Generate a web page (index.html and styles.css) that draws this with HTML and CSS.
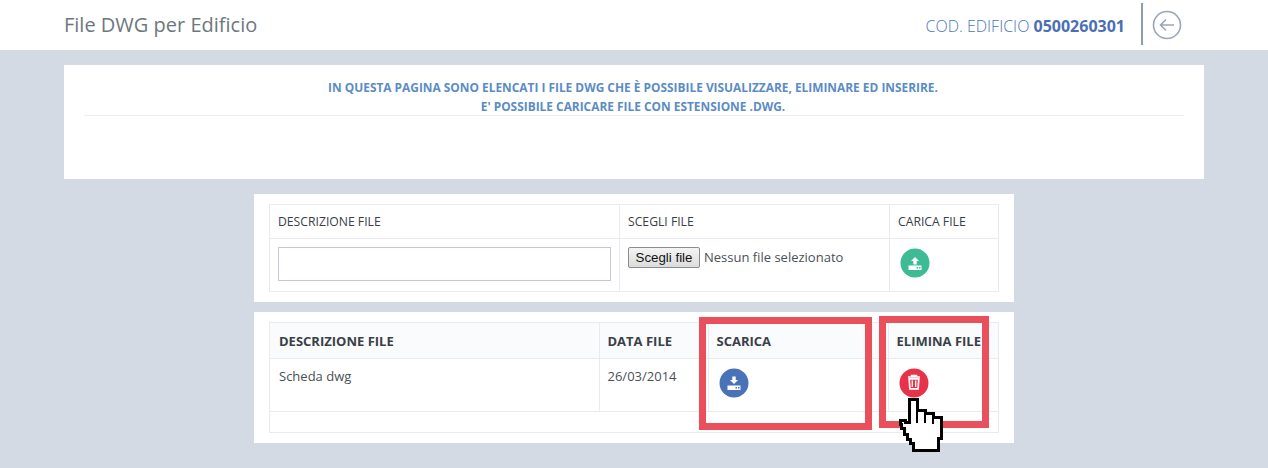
FILE: index.html
```html
<!DOCTYPE html>
<html lang="it">
<head>
<meta charset="utf-8">
<title>File DWG per Edificio</title>
<link rel="stylesheet" href="styles.css">
</head>
<body>
<header class="topbar">
  <h1 class="title">File DWG per Edificio</h1>
  <div class="topbar-right">
    <span class="code">COD. EDIFICIO <strong>0500260301</strong></span>
    <span class="divider"></span>
    <svg class="back" width="30" height="30" viewBox="0 0 30 30" fill="none" stroke="#9aa4bd">
      <circle cx="15" cy="15" r="13.5" stroke-width="1.6"/>
      <path d="M22 15H8.5M14 9.5L8.5 15l5.5 5.500" stroke-width="1.6"/>
    </svg>
  </div>
</header>

<section class="panel intro">
  <p class="intro-text">In questa pagina sono elencati i file DWG che è possibile visualizzare, eliminare ed inserire.<br>E' possibile caricare file con estensione .dwg.</p>
  <div class="intro-rule"></div>
</section>

<section class="card">
  <table class="grid upload">
    <thead>
      <tr><th class="u1">Descrizione file</th><th class="u2">Scegli file</th><th class="u3">Carica file</th></tr>
    </thead>
    <tbody>
      <tr>
        <td><input class="text-input" type="text"></td>
        <td><span class="file-picker"><button class="file-btn" type="button">Scegli file</button><span class="file-name">Nessun file selezionato</span></span></td>
        <td>
          <svg class="round" width="30" height="30" viewBox="0 0 30 30">
            <circle cx="15" cy="15" r="14.500" fill="#3dbb93"/>
            <path d="M15 9l4 4h-2.300v3.500h-3.400V13H11z" fill="#fff"/>
            <path d="M8.500 17.500h13v4.500h-13z" fill="#fff"/>
            <path d="M16.500 19h1.500v1.500h-1.500zM19 19h1.500v1.500H19z" fill="#3dbb93"/>
          </svg>
        </td>
      </tr>
    </tbody>
  </table>
</section>

<section class="card list-card">
  <div class="list-frame">
    <table class="grid list">
      <thead>
        <tr><th class="l1">Descrizione file</th><th class="l2">Data file</th><th class="l3">Scarica</th><th class="l4">Elimina file</th></tr>
      </thead>
      <tbody>
        <tr>
          <td>Scheda dwg</td>
          <td>26/03/2014</td>
          <td>
            <svg class="round" width="30" height="30" viewBox="0 0 30 30">
              <circle cx="15" cy="15" r="14.500" fill="#4a72b8"/>
              <path d="M13.300 8.500h3.400V12H19l-4 4-4-4h2.300z" fill="#fff"/>
              <path d="M8.500 17.500h13v4.500h-13z" fill="#fff"/>
              <path d="M16.500 19h1.500v1.500h-1.500zM19 19h1.500v1.500H19z" fill="#4a72b8"/>
            </svg>
          </td>
          <td>
            <svg class="round" width="30" height="30" viewBox="0 0 30 30">
              <circle cx="15" cy="15" r="14.500" fill="#e8324a"/>
              <path d="M9 9h12M12.500 9V7.500h5V9" fill="none" stroke="#fff" stroke-width="1.500"/>
              <path d="M10.200 10.800h9.600l-.7 10h-8.200z" fill="none" stroke="#fff" stroke-width="1.700"/>
              <path d="M13.300 12.500v6.500M16.700 12.500v6.500" fill="none" stroke="#fff" stroke-width="1.300"/>
            </svg>
          </td>
        </tr>
      </tbody>
    </table>
  </div>
</section>

<div class="mark mark-download"></div>
<div class="mark mark-delete"></div>
<svg class="cursor" width="46" height="58" viewBox="898 396 46 58" shape-rendering="crispEdges">
  <path d="M909 399h8v11h8v3h8v4h8v21h-3v12h-25v-7h-3v-4h-3v-5h-3v-6h-3v-4h-1v-4h5v2h4z" fill="#fff" stroke="#000" stroke-width="3"/>
  <path d="M917 403v20M925 412v11M933 416v8" fill="none" stroke="#000" stroke-width="2"/>
</svg>
</body>
</html>
```
FILE: styles.css
```css
* { box-sizing: border-box; }
html, body { margin: 0; padding: 0; }
body {
  height: 468px;
  overflow: hidden;
  position: relative;
  background: #d3dae4;
  font-family: "Open Sans", "Liberation Sans", sans-serif;
  font-size: 12px;
  color: #4a5057;
}
.topbar {
  height: 50px;
  background: #fff;
  padding: 0 87px 0 64px;
  display: flex;
  align-items: center;
  justify-content: space-between;
}
.title {
  margin: 0;
  font-size: 20px;
  font-weight: 400;
  color: #6e7780;
  position: relative;
  top: -1px;
}
.topbar-right { display: flex; align-items: center; height: 50px; }
.code { font-size: 16px; font-weight: 300; color: #4a76bd; margin-right: 16px; position: relative; top: 1px; }
.code strong { font-weight: 700; color: #4a6fb3; }
.divider { width: 2px; height: 42px; background: #8f9ab3; margin-right: 9px; position: relative; top: -1px; }
.back { display: block; margin-top: -1px; margin-right: -1px; }

.panel {
  margin: 15px 64px 0;
  height: 114px;
  background: #fff;
  padding: 13px 20px 0;
}
.intro-text {
  margin: 0 2px -1px 0;
  text-align: center;
  text-transform: uppercase;
  font-weight: 700;
  font-size: 11.900px;
  line-height: 19px;
  color: #5b8cc6;
}
.intro-rule { height: 1px; background: #eceef2; }

.card {
  width: 760px;
  margin: 15px auto 0;
  background: #fff;
  padding: 10px 15px;
}
.list-card { margin-top: 10px; height: 131px; }
.list-frame { border: 1px solid #e9ebf1; height: 111px; }

.grid { border-collapse: collapse; table-layout: fixed; width: 100%; }
.grid th, .grid td {
  border: 1px solid #e9ebf1;
  padding: 0 8px;
  text-align: left;
  vertical-align: top;
}
.grid th { text-transform: uppercase; font-weight: 400; font-size: 12.200px; color: #373e48; height: 34px; vertical-align: middle; }
.grid td { padding-top: 8px; }
.upload { width: 729px; }
.u1 { width: 350px; }
.u2 { width: 270px; }
.u3 { width: 109px; }
.upload td { height: 53px; }
.text-input {
  display: block;
  width: 333px;
  height: 34px;
  border: 1px solid #c4c8d6;
  background: #fff;
  padding: 0;
  outline: none;
}
.file-picker { display: flex; align-items: flex-start; }
.file-btn {
  width: 72px;
  height: 21px;
  padding: 0;
  border: 1px solid #8c8c8c;
  border-radius: 2px;
  background: linear-gradient(#f4f4f4, #dcdcdc);
  font-family: "Liberation Sans", Arial, sans-serif;
  font-size: 13.300px;
  color: #111;
}
.file-name { margin-left: 4px; font-size: 13px; line-height: 20px; color: #4a5057; }
.round { display: block; margin-top: 1px; margin-left: 2px; }

.list { width: 728px; }
.list th { font-size: 13px; font-weight: 700; color: #3a3f48; background: #fafbfd; height: 35px; border-top: 0; padding-top: 2px; }
.list tr > :first-child { border-left: 0; padding-left: 9px; }
.list tr > :last-child { border-right: 0; }
.list td { font-size: 13px; height: 53px; padding-top: 8px; }
.list td .round { margin-top: 1px; margin-left: 2px; }
.l1 { width: 329px; }
.l2 { width: 109px; }
.l3 { width: 180px; }
.l4 { width: 110px; }

.mark { position: absolute; border: 7px solid #ea4f5c; }
.mark-download { left: 699px; top: 317px; width: 173px; height: 113px; }
.mark-delete { left: 879px; top: 316px; width: 110px; height: 112px; }
.cursor { position: absolute; left: 898px; top: 396px; }
```
